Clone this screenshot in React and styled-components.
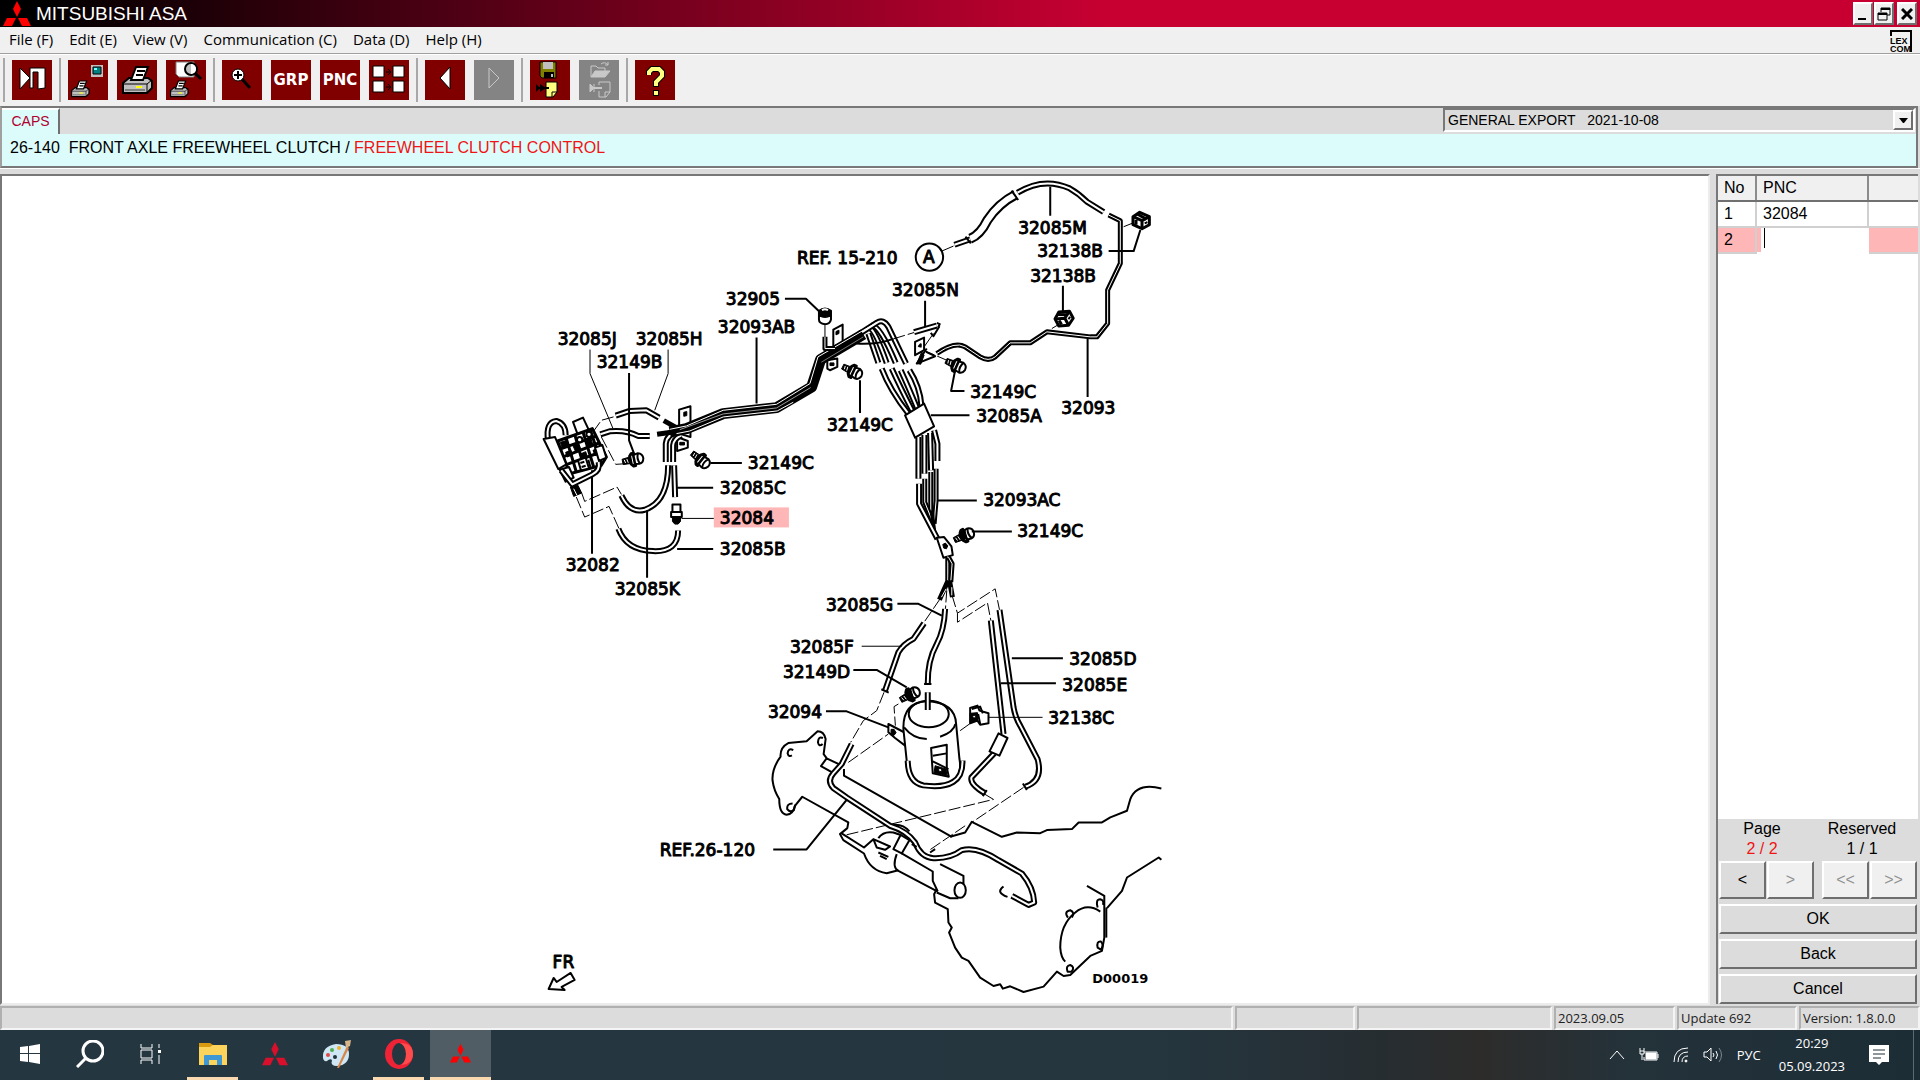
import styled, { createGlobalStyle, css } from "styled-components";

const GlobalStyle = createGlobalStyle`
  * {
    box-sizing: border-box;
  }

  body {
    margin: 0;
    background-color: #dcdcdc;
    font-family: "Liberation Sans", Arial, sans-serif;
    font-size: 16px;
    color: #000;
  }

  button, input, select {
    font: inherit;
    color: inherit;
    margin: 0;
    padding: 0;
    border: 0;
    border-radius: 0;
  }
`;

const uiFont = '"Open Sans", "Noto Sans", sans-serif';

const raised = css`
  border: 2px solid;
  border-color: #fff #6e6e6e #6e6e6e #fff;
`;

const Window = styled.div`
  height: 100vh;
  display: flex;
  flex-direction: column;
  overflow: hidden;
`;

/* ---------- title and menu ---------- */

const TitleBar = styled.header`
  height: 27px;
  flex: none;
  display: flex;
  align-items: center;
  gap: 5px;
  padding: 0 3px;
  background: linear-gradient(to right, #000 0%, #000 2%, #c80032 58%);
`;

const AppTitle = styled.h1`
  flex: 1;
  margin: 0;
  font-size: 19px;
  font-weight: normal;
  color: #fff;
`;

const WindowButtons = styled.div`
  display: flex;
  gap: 1px;
`;

const WindowButton = styled.button`
  ${raised}
  width: 20px;
  height: 23px;
  margin-left: ${(props) => (props.$apart ? "2px" : "0")};
  background-color: #f0f0f0;
  display: grid;
  place-items: center;
`;

const MenuBar = styled.nav`
  height: 27px;
  flex: none;
  display: flex;
  align-items: center;
  background-color: #f0f0f0;
  border-bottom: 1px solid #a0a0a0;
  padding: 0 8px 0 1px;
`;

const MenuItem = styled.button`
  padding: 0 8px 2px;
  background: none;
  font-family: ${uiFont};
  font-size: 15px;
  line-height: 24px;
`;

const Lexcom = styled.svg`
  margin-left: auto;
  align-self: flex-end;
`;

/* ---------- toolbar ---------- */

const ToolBar = styled.div`
  height: 52px;
  flex: none;
  display: flex;
  align-items: center;
  background-color: #f0f0f0;
  border-top: 1px solid #fff;
  padding: 0 0 1px 3px;
`;

const ToolGroup = styled.div`
  display: flex;
  gap: 9px;
  padding: 0 7px;
  height: 44px;
  align-items: center;
  border-left: 2px solid #a8a8a8;
`;

const ToolButton = styled.button`
  width: 40px;
  height: 40px;
  background-color: ${(props) => (props.disabled ? "#848484" : "#800000")};

  svg {
    display: block;
  }
`;

/* ---------- caps header ---------- */

const CapsFrame = styled.section`
  flex: none;
  border: 2px solid;
  border-color: #787878 #787878 #787878 #a0a0a0;
  margin-right: 2px;
`;

const TabStrip = styled.div`
  height: 26px;
  display: flex;
  justify-content: space-between;
  background-color: #dcdcdc;
`;

const Tab = styled.button`
  width: 58px;
  height: 26px;
  padding: 0 0 3px 1px;
  background-color: #dcfcfc;
  border-top: 2px solid #fff;
  border-right: 2px solid #707070;
  color: #b00030;
  font-size: 14px;
`;

const Catalog = styled.div`
  position: relative;
  width: 472px;
  height: 24px;
  margin-right: 1px;
  border: 2px solid;
  border-color: #787878 #fff #fff #787878;
`;

const CatalogSelect = styled.select`
  appearance: none;
  width: 100%;
  height: 20px;
  padding-left: 3px;
  background-color: #dcdcdc;
  font-size: 14px;
  outline: none;
`;

const CatalogArrow = styled.span`
  ${raised}
  position: absolute;
  top: 0;
  right: 0;
  width: 20px;
  height: 20px;
  background-color: #f0f0f0;
  display: grid;
  place-items: center;
  pointer-events: none;
`;

const PathLine = styled.div`
  height: 32px;
  padding-left: 8px;
  background-color: #dcfcfc;
  line-height: 28px;
  white-space: pre;

  span {
    color: #f01414;
  }
`;

/* ---------- work area ---------- */

const Work = styled.main`
  flex: 1;
  min-height: 0;
  display: flex;
  gap: 6px;
  padding-top: 5px;
  border-top: 1px solid #fff;
`;

const Sheet = styled.div`
  flex: 1;
  min-width: 0;
  background-color: #fff;
  border: 2px solid;
  border-color: #787878 #ececec #ececec #787878;
  margin-bottom: 1px;
`;

const Drawing = styled.svg`
  display: block;
  width: 100%;
  height: 100%;
  fill: none;
  stroke: #000;
  stroke-linejoin: round;

  path, ellipse, circle, rect {
    vector-effect: non-scaling-stroke;
  }
`;

const Line = styled.path`
  stroke-width: ${(props) => props.$w || 2}px;
`;

const Dashed = styled.path`
  stroke-width: 1px;
  stroke-dasharray: 12 3;
`;

const Solid = styled.path`
  fill: #fff;
  stroke-width: ${(props) => props.$w || 2}px;
`;

const Dark = styled.path`
  fill: #000;
  stroke-width: 1px;
`;

const Label = styled.text`
  fill: #000;
  stroke: #000;
  stroke-width: ${(props) => (props.$small ? "0" : "1px")};
  font-family: "DejaVu Sans", sans-serif;
  font-size: ${(props) => (props.$small ? "13px" : "17px")};
  font-weight: ${(props) => (props.$small ? "bold" : "normal")};
`;

const Side = styled.aside`
  width: 202px;
  flex: none;
  display: flex;
  flex-direction: column;
  border-top: 2px solid #787878;
  border-left: 2px solid #787878;
  margin: 0 2px 2px 0;
`;

const PartList = styled.div`
  flex: 1;
  background-color: #fff;
`;

const PartTable = styled.table`
  width: 100%;
  table-layout: fixed;
  border-collapse: collapse;
  text-align: left;

  th {
    height: 25px;
    padding: 0 0 0 6px;
    font-weight: normal;
    background-color: #f0f0f0;
    border-right: 2px solid #8c8c8c;
    border-bottom: 2px solid #707070;
  }

  td {
    height: 26px;
    padding: 0 0 0 6px;
    border-right: 2px solid #d0d0d0;
    border-bottom: 2px solid #d0d0d0;
  }

  th:last-child, td:last-child {
    border-right: 0;
  }
`;

const ActiveRow = styled.tr`
  background-color: #ffb6b6;

  td:nth-child(2) {
    padding-left: 4px;
    border-color: #fff;
  }
`;

const EntryCell = styled.div`
  display: flex;
  align-items: flex-start;
  height: 24px;
  padding-left: 3px;
  background-color: #fff;

  input {
    width: 90px;
    height: 20px;
    outline: none;
    background: none;
    border-left: 1px solid #000;
  }
`;

const PageInfo = styled.div`
  display: grid;
  grid-template-columns: 88px 1fr;
  text-align: center;
  line-height: 20px;
  padding-bottom: 2px;

  p {
    margin: 0;
    white-space: pre;
  }
`;

const PageValue = styled.p`
  color: ${(props) => (props.$active ? "#f01414" : "#000")};
`;

const Actions = styled.div`
  display: flex;
  flex-direction: column;
  gap: 5px;
  padding: 0 1px;
`;

const Pager = styled.div`
  display: flex;
  gap: 8px;
`;

const PagerPair = styled.div`
  flex: 1;
  display: flex;
  gap: 1px;
`;

const PanelButton = styled.button`
  ${raised}
  flex: 1;
  height: ${(props) => (props.$tall ? "38px" : "30px")};
  flex-basis: ${(props) => (props.$tall ? "0" : "30px")};
  background-color: ${(props) => (props.disabled ? "#f0f0f0" : "#dcdcdc")};
  color: ${(props) => (props.disabled ? "#909090" : "#000")};
`;

/* ---------- status and task bar ---------- */

const StatusBar = styled.footer`
  height: 24px;
  flex: none;
  display: flex;
  gap: 2px;
  font-family: ${uiFont};
  font-size: 13px;
  line-height: 20px;
  color: #222;
`;

const StatusCell = styled.div`
  flex: ${(props) => (props.$width ? "none" : "1")};
  width: ${(props) => (props.$width ? props.$width + "px" : "auto")};
  padding-left: 2px;
  border: 2px solid;
  border-color: #b0b0b0 #f4f4f4 #f4f4f4 #b0b0b0;
`;

const TaskBar = styled.div`
  height: 50px;
  flex: none;
  display: flex;
  justify-content: space-between;
  background: linear-gradient(to right, #243640 0%, #25363f 60%, #262d31 72%, #2d2c2b 77%, #24323a 85%, #1c2d36 100%);
  color: #fff;
`;

const TaskIcons = styled.div`
  display: flex;
  gap: 1px;
`;

const TaskButton = styled.button`
  width: ${(props) => (props.$wide ? "61px" : "59px")};
  display: grid;
  grid-template-rows: 1fr 3px;
  place-items: center;
  background-color: ${(props) => (props.$active ? "#505d65" : "transparent")};

  &::after {
    content: "";
    width: ${(props) => (props.$active ? "61px" : "51px")};
    height: 3px;
    background-color: ${(props) => (props.$running ? "#fbd9b0" : "transparent")};
  }
`;

const Tray = styled.div`
  display: flex;
  align-items: center;
  gap: 14px;
  padding-right: 6px;
  font-family: ${uiFont};
  font-size: 13px;
`;

const Clock = styled.time`
  text-align: center;
  line-height: 23px;
  padding: 0 4px;
`;

const Notices = styled.button`
  height: 50px;
  background: none;
  display: flex;
  align-items: center;
  padding: 0 24px 0 6px;
  border-right: 1px solid #5d6a70;
`;

/* ---------- icons ---------- */

function Diamonds({ size, color }) {
  return (
    <svg width={size} height={size} viewBox="0 0 28 26" fill={color}>
      <path d="M14 0 L18 8 L14 16 L10 8 Z" />
      <path d="M13 17 L9 25 H0 L4 17 Z" />
      <path d="M15 17 L24 17 L28 25 H19 Z" />
    </svg>
  );
}

function Printer({ x = 0, y = 0, scale = 1 }) {
  return (
    <g transform={`translate(${x} ${y}) scale(${scale})`} stroke="#000">
      <path d="M1 16 L7 11 H26 L30 14 V21 L25 26 H1 Z" fill="#c0c0c0" strokeWidth="2" />
      <path d="M9 13 L14 0 H26 L21 13 Z" fill="#fff" strokeWidth="2" />
      <path d="M15 4 H23 M14 8 H21" strokeWidth="2" />
      <path d="M1 17 H25 L30 13 M25 17 V26" fill="none" />
      <path d="M3 23 H23" stroke="#808080" strokeWidth="2" />
      <path d="M14 19 H20 V21 H14 Z" fill="#ff0" stroke="none" />
    </g>
  );
}

function ExitIcon() {
  return (
    <svg width="40" height="40" fill="#fff" stroke="#000">
      <path d="M8 8 L18 18 L8 29 Z" />
      <path d="M18 8 H33 V28 L26 29 V12 H21 V28 H18 Z" />
    </svg>
  );
}

function PrintScreenIcon() {
  return (
    <svg width="40" height="40">
      <path d="M23 5 H35 V17 H23 Z" fill="#c0c0c0" />
      <path d="M25 7 H33 V14 H25 Z" fill="#008080" stroke="#000" />
      <path d="M26 8 h3 v2 h-3 z" fill="#7ff" />
      <Printer x={3} y={21} scale={0.6} />
    </svg>
  );
}

function PrintIcon() {
  return (
    <svg width="40" height="40">
      <Printer x={5} y={7} />
    </svg>
  );
}

function PreviewIcon() {
  return (
    <svg width="40" height="40">
      <path d="M10 2 H28 V17 H13 L10 14 Z" fill="#fff" stroke="#808080" />
      <path d="M28 12 L35 19" stroke="#000" strokeWidth="3" />
      <circle cx="25" cy="9" r="6" fill="#c0c0c0" stroke="#000" strokeWidth="2" />
      <path d="M25 4 a5 5 0 0 1 0 10 z" fill="#fff" />
      <Printer x={4} y={21} scale={0.6} />
    </svg>
  );
}

function MagnifyIcon() {
  return (
    <svg width="40" height="40">
      <path d="M20 19 L28 28" stroke="#000" strokeWidth="3" />
      <circle cx="16" cy="15" r="6" fill="#fff" stroke="#000" />
      <path d="M16 11 V19 M12 15 H20" stroke="#000" strokeWidth="2" />
    </svg>
  );
}

const ToolWord = styled.span`
  font-family: "DejaVu Sans", sans-serif;
  font-weight: bold;
  font-size: 15px;
  color: #fff;
`;

function LinkIcon() {
  return (
    <svg width="40" height="40" fill="#fff" stroke="#000">
      <path d="M4 6 h11 v11 h-11 z M24 6 h11 v11 h-11 z M4 21 h11 v11 h-11 z M24 21 h11 v11 h-11 z" />
      <path d="M17 12 h5 M19 9 l3 3 l-3 3 M17 27 h5 M19 24 l3 3 l-3 3" fill="none" />
    </svg>
  );
}

function ArrowIcon({ next }) {
  return (
    <svg width="40" height="40">
      {next ? (
        <path d="M15 8 L25 18 L15 28 Z" fill="none" stroke="#c8c8c8" />
      ) : (
        <path d="M25 7 V29 L15 18 Z" fill="#fff" stroke="#000" />
      )}
    </svg>
  );
}

function SaveIcon() {
  return (
    <svg width="40" height="40">
      <path d="M10 2 H26 V18 H12 L10 16 Z" fill="#808000" stroke="#000" />
      <path d="M13 2 H23 V9 H13 Z" fill="#c0c0c0" />
      <path d="M14 12 H24 V18 H14 Z" fill="#000" />
      <path d="M21 14 h2 v3 h-2 z" fill="#c0c0c0" />
      <path d="M16 22 H27 V32 L23 37 H16 Z" fill="#ffff80" stroke="#000" />
      <path d="M27 32 H22 V37" fill="none" stroke="#000" />
      <path d="M6 24 L10 28 L6 32 Z M10 24 L16 28 L10 32 Z" fill="#000" />
      <path d="M6 28 H19" stroke="#000" strokeWidth="2" />
    </svg>
  );
}

function OpenIcon() {
  return (
    <svg width="40" height="40" fill="none" stroke="#c8c8c8">
      <path d="M12 17 V6 H17 L19 8 H26 V11" />
      <path d="M12 17 L16 11 H31 L26 17 Z" fill="#c8c8c8" />
      <path d="M22 4 Q26 1 29 5 M29 2 V5 H26" />
      <path d="M20 25 V22 H31 V32 L27 37 H20 V31 M31 32 H26 V37" />
      <path d="M11 24 L15 28 L11 32 Z M15 24 V32" fill="#c8c8c8" />
      <path d="M11 28 H23" strokeWidth="2" />
    </svg>
  );
}

function HelpIcon() {
  return (
    <svg width="40" height="40" fill="none">
      <path d="M14 15 V12 L17 9 H24 L27 12 V16 L21 22 V27" stroke="#000" strokeWidth="6" />
      <path d="M18 30 H24 V36 H18 Z" fill="#000" />
      <path d="M14 15 V12 L17 9 H24 L27 12 V16 L21 22 V26" stroke="#ffff80" strokeWidth="4" />
      <path d="M19 31 H23 V35 H19 Z" fill="#ffff80" />
    </svg>
  );
}

/* ---------- parts of the drawing ---------- */

// a pipe is a black stroke with a thinner white one on top
function Tube({ d, w = 6, bore = 2 }) {
  return (
    <>
      <Line d={d} $w={w} />
      <Line d={d} $w={bore} stroke="#fff" />
    </>
  );
}

function Bolt({ x, y, turn }) {
  return (
    <g transform={`translate(${x} ${y}) rotate(${turn})`}>
      <Dark d="M-32 -8 L-8 -10 V10 L-32 8 Z" />
      <Line d="M-26 -5 L-24 5 M-18 -6 L-16 6" stroke="#fff" $w={1} />
      <Solid d="M-8 -12 L-2 -19 H4 V19 H-2 L-8 12 Z" $w={3} />
      <Solid d="M4 -14 L18 -16 Q32 -12 31 2 Q28 16 16 16 L4 14 Z" />
      <Line d="M18 -15 Q10 0 18 15" />
    </g>
  );
}

function Clip({ x, y, turn = 0 }) {
  return (
    <g transform={`translate(${x} ${y}) rotate(${turn})`}>
      <Solid d="M-25 -12 L-5 -25 L24 -12 V12 L2 24 L-25 12 Z" $w={3} />
      <Line d="M-25 -12 L2 0 L24 -12 M2 0 V24 M-12 -20 L16 -4 M-16 -2 V12" $w={3} />
      <Line d="M10 8 L18 4" />
    </g>
  );
}

const labels = [
  [1018, 234, "32085M"],
  [1037, 257, "32138B"],
  [1030, 282, "32138B"],
  [797, 264, "REF. 15-210"],
  [892, 296, "32085N"],
  [726, 305, "32905"],
  [718, 333, "32093AB"],
  [558, 345, "32085J"],
  [636, 345, "32085H"],
  [597, 368, "32149B"],
  [970, 398, "32149C"],
  [1061, 414, "32093"],
  [976, 422, "32085A"],
  [827, 431, "32149C"],
  [748, 469, "32149C"],
  [720, 494, "32085C"],
  [983, 506, "32093AC"],
  [720, 524, "32084"],
  [1017, 537, "32149C"],
  [720, 555, "32085B"],
  [566, 571, "32082"],
  [615, 594, "32085K"],
  [826, 610, "32085G"],
  [790, 652, "32085F"],
  [1069, 664, "32085D"],
  [783, 677, "32149D"],
  [1062, 690, "32085E"],
  [768, 717, "32094"],
  [1048, 723, "32138C"],
  [660, 855, "REF.26-120"],
  [553, 967, "FR"],
];

const third = "scale(0.33333)";

function ControlValve() {
  return (
    <g transform={`translate(530 320) ${third}`}>
      <Line d="M181 88 V160 L250 325 M415 88 V160 L375 270" $w={1} />
      <Dashed d="M190 335 L215 300 L258 288 M215 350 L258 432 L290 430 M155 515 L165 543 L262 500 L275 522 M140 530 L165 590 L238 558 L268 625" />
      <Tube d="M258 286 L300 272 L350 270 L388 292" />
      <Tube d="M212 342 L240 333 Q290 328 325 347 H360" />
      <Tube d="M275 525 Q300 580 345 568 Q415 545 415 435" />
      <Tube d="M266 625 Q290 690 370 692 Q445 695 445 630" />
      <Tube d="M433 435 L436 530" />
      <Line d="M680 52 V250 M542 428 H636 M442 502 H550 M442 686 H550 M187 450 V700 M352 570 V772" />
      <Line d="M455 594 H552" $w={1} />
      <Bolt x={310} y={418} turn={-12} />
      <Bolt x={512} y={418} turn={38} />
      <Line d="M298 158 V360 L315 405" />

      <Solid d="M428 552 H452 V575 H428 Z M424 575 H456 V590 H424 Z" />
      <Dark d="M428 590 H452 V603 L445 611 H435 L428 603 Z" />

      <Solid d="M130 305 L160 292 L178 330 L145 345 Z" />
      <Solid d="M84 362 L188 325 L230 410 L215 435 L120 460 Z" $w={3} />
      <Line d="M95 385 L198 348 M104 408 L208 368 M112 432 L222 392 M110 355 L140 455 M136 345 L165 448 M160 335 L192 440 M182 330 L216 432" $w={3} />
      <Dark d="M92 366 L112 360 L118 376 L98 384 Z M128 372 L146 366 L154 388 L138 394 Z M108 396 L124 390 L128 404 L112 410 Z M168 356 L182 350 L190 374 L176 380 Z M150 402 L168 394 L174 412 L158 420 Z M190 390 L204 384 L210 400 L196 406 Z" />
      <Solid d="M145 420 L168 412 L178 444 L154 450 Z M196 382 L218 374 L230 412 L208 422 Z" />
      <Line d="M152 428 L164 424 M156 440 L168 436 M176 418 L182 440" />
      <circle cx="178" cy="342" r="8" fill="#fff" strokeWidth="2" />
      <circle cx="150" cy="358" r="8" fill="#fff" strokeWidth="2" />
      <Tube d="M55 358 Q48 305 80 302 Q108 310 108 345" />
      <Solid d="M42 356 L76 350 L110 432 L86 446 Z" />
      <Solid d="M90 448 L118 440 L132 472 L108 484 Z" />
      <Tube d="M95 450 L128 492 L188 462 Q212 450 207 425" />
      <Dark d="M122 500 L145 495 L156 518 L132 528 Z" />
      <Line d="M132 505 L142 525" stroke="#fff" $w={1} />

      <Solid d="M448 268 L482 258 V350 L448 340 Z M442 350 L474 362 V382 L442 392 Z" />
      <Dark d="M462 276 l9 -2 v12 l-9 2 z M450 366 h14 v8 h-14 z" />
      <Tube d="M408 425 V370 Q412 340 445 335" />
      <Tube d="M430 425 V375 Q432 355 455 345" />
    </g>
  );
}

function UpperPipes() {
  return (
    <g transform={`translate(780 170) ${third}`}>
      <Solid d="M160 478 L188 463 V515 L160 530 Z M142 570 L172 565 V590 L150 600 L142 595 Z" />
      <Dark d="M168 484 l9 -4 v10 l-9 4 z M150 578 h12 v8 h-12 z" />
      <Line d="M-348 751 L-310 772 M-368 792 L-320 785" $w={5} />
      <Tube d="M265 490 L295 578" />
      <Tube d="M270 475 Q285 480 320 578" />
      <Tube d="M275 465 Q300 465 347 578" />
      <Tube d="M240 490 L290 458 Q310 445 325 470 L378 580" />
      <Line d="M-330 785 L-280 775 L-170 730 L-10 712 L95 650 L122 568 L250 492" $w={11} />
      <Line d="M-330 777 L-280 767 L-170 720 L-10 702 L90 640 L114 560 L290 457" stroke="#fff" $w={1} />
      <Line d="M-310 790 L-270 782 L-170 740 L-8 722 L40 696" stroke="#fff" $w={1} />
      <Line d="M-300 778 L-170 731 L-10 713 L92 652" stroke="#999" $w={1} />
      <Line d="M124 576 L250 500" stroke="#777" $w={1} />
      <Tube d="M135 500 V535 H165" w={5} bore={1} />

      <Solid d="M117 422 Q135 408 153 422 V448 Q150 462 135 462 Q117 460 117 448 Z" />
      <Dark d="M117 422 Q135 408 153 422 V438 Q135 446 117 438 Z" />
      <Line d="M126 420 Q135 415 144 420" stroke="#fff" />
      <Line d="M135 465 V500" $w={1} />
      <Line d="M230 520 Q290 524 340 506" />
      <Dashed d="M340 506 L402 487 M430 540 L500 570" />

      <Tube d="M402 486 L470 466" />
      <Line d="M470 458 L479 462 L474 472" />
      <Solid d="M405 515 L432 502 V540 L405 555 Z" />
      <Line d="M478 468 L460 498 L452 488 M440 535 L410 580 L465 558 L438 545 M415 530 L422 522 V532" />
      <Dark d="M410 580 L425 545 L432 555 L422 582 Z" />
      <Line d="M432 530 L460 490" $w={1} />

      <Line d="M485 243 L520 228 M1030 170 L1055 160 M815 475 L840 460" $w={1} />
      <Tube d="M523 224 L575 206" />
      <Tube d="M570 206 Q600 195 622 150 Q655 100 706 74" w={10} bore={6} />
      <Line d="M556 200 L572 220 M694 62 L714 90" />
      <Tube d="M712 68 Q790 20 868 55 Q895 70 920 95 L970 126" />
      <Tube d="M985 135 L1020 152 V280 L982 360 V460 L950 500 H930 L800 485 L750 518 H690 L645 560 Q625 575 600 560 L555 530 Q525 512 470 550" w={5} bore={1} />
      <Clip x={1083} y={152} />
      <Clip x={852} y={445} turn={-28} />

      <Line d="M810 50 V137 M985 243 H1060 L1080 180 M848 347 V425 M435 392 V470 M922 505 V680 M240 630 V728 M525 600 L513 662 H553 M452 735 H568 M15 386 H78 L118 424" />
      <circle cx="448" cy="261" r="41" strokeWidth="2" />
      <Bolt x={217} y={603} turn={26} />
      <Bolt x={527} y={585} turn={24} />

      <Tube d="M305 595 Q330 660 385 730" />
      <Tube d="M335 595 Q360 650 398 724" />
      <Tube d="M362 600 Q385 650 412 716" />
      <Tube d="M388 600 Q420 650 424 706" />
      <Solid d="M375 735 L432 700 L462 768 L405 802 Z" />
    </g>
  );
}

function MiddlePipes() {
  return (
    <g transform={`translate(780 430) ${third}`}>
      <Tube d="M415 20 V145" />
      <Tube d="M433 14 V130" />
      <Tube d="M450 8 L453 120" />
      <Tube d="M462 0 L472 40 V92" />
      <Tube d="M452 125 V270" w={5} bore={1} />
      <Tube d="M434 145 V215 L458 275" w={5} bore={1} />
      <Tube d="M468 115 V210 L462 280" w={5} bore={1} />
      <Line d="M455 240 L462 300" $w={4} />
      <Tube d="M417 160 V220 L472 325" />
      <Solid d="M470 322 L492 320 L514 348 L518 374 L490 382 Z" />
      <Dark d="M488 342 l8 -4 l7 8 l-4 9 l-8 -2 z" />
      <Tube d="M503 378 V450" w={5} bore={1} />
      <Tube d="M505 380 L516 400 L512 455" w={5} bore={1} />
      <Line d="M504 450 L478 508 M508 450 L517 500" $w={5} />
      <Line d="M498 475 L484 500 M515 470 V495" stroke="#fff" $w={1} />
      <Dashed d="M480 505 L432 575 M500 480 L496 535 M516 495 L532 548 L645 475 L658 538 M532 548 V575 L622 517 L632 570" />
      <Dashed d="M312 785 L290 840 L250 870 L212 935 M355 820 L342 828 L346 885 M540 900 L575 875" />

      <Tube d="M495 535 Q492 600 470 640 Q442 690 443 760" />
      <Tube d="M432 578 L400 625 Q370 640 355 665 L315 780" />
      <Tube d="M658 538 L700 830 Q705 860 720 885 L772 985 Q790 1050 735 1068" />
      <Tube d="M632 570 L670 910" />
      <Tube d="M642 968 L574 1040 Q568 1060 615 1088" />
      <Solid d="M655 908 L682 922 L658 975 L628 962 Z" />
      <Line d="M432 760 H454 M304 776 L326 786 M728 1058 L740 1078 M608 1096 L620 1078" />

      <Solid d="M325 880 L382 910 V950 L345 922 L325 905 Z" />
      <Dark d="M333 896 h9 l6 10 l-6 8 h-9 z" />
      <Solid d="M370 895 Q368 815 440 812 Q525 815 528 880 L538 985 Q552 1060 470 1068 Q390 1066 382 1010 Z" />
      <ellipse cx="446" cy="850" rx="60" ry="40" strokeWidth="2" />
      <Line d="M372 890 Q400 925 440 925 M480 918 Q520 905 526 880" />
      <Tube d="M383 990 Q384 1055 430 1064 Q550 1080 547 990" />
      <Tube d="M443 785 V838" />
      <Solid d="M453 952 L500 942 V1010 L506 1038 L458 1028 Z" />
      <Line d="M458 975 L500 968 M458 992 L505 1015" />
      <Dark d="M465 1005 L498 1015 L500 1034 L462 1026 Z" />
      <Solid d="M474 1015 l8 -2 l4 8 l-8 2 z" $w={1} />

      <Solid d="M570 832 L592 825 L598 840 L625 848 V878 L600 882 L592 870 L570 878 Z" />
      <Dark d="M570 848 L592 846 V870 L570 876 Z" />
      <circle cx="582" cy="858" r="4" fill="#fff" strokeWidth="1" />
      <Line d="M575 835 L600 828 L608 848 M594 850 L600 880" />

      <Bolt x={552} y={316} turn={-24} />
      <Bolt x={390} y={793} turn={-28} />
      <Dark d="M540 305 l14 -8 l6 26 l-14 8 z M378 786 l14 -10 l8 26 l-14 8 z" />
      <Line d="M352 520 H415 L485 555 M220 718 H290 L380 770 M138 842 H200 L325 890 M472 210 H590 M575 303 H695 M695 683 H848 M662 758 H827" />
      <Line d="M245 647 H365 M625 860 H787" $w={1} />
    </g>
  );
}

function AxleTube() {
  return (
    <g transform={`translate(640 700) ${third}`}>
      <Line d="M560 172 L551 160 L557 115 Q552 92 533 92 L500 122 L445 127 Q420 140 422 168 Q395 205 398 240 Q402 270 418 295 Q418 340 440 342 Q460 340 465 315 L487 288 L625 365 L622 382 L600 400 L610 418 L672 458 Q690 510 740 517 L775 508" />
      <Line d="M549 112 Q535 105 534 125 Q537 140 548 130 M460 148 Q445 140 443 158 Q446 170 456 164 M458 308 Q440 308 442 325 Q450 336 462 328 L466 312" />
      <Line d="M600 192 L560 173 L543 196 L578 216 M612 205 V225 L935 408" />
      <Line d="M605 398 L672 440 L700 415 L750 437 L735 447 L710 440 L700 415 M715 412 Q730 390 760 395 L780 402 M715 455 L745 468 M720 465 L740 475 M762 372 Q790 370 808 392" />
      <Line d="M770 460 Q755 500 775 510 L893 572 M785 458 L878 512 V540 L893 572" />
      <Dashed d="M625 185 L745 100 M620 402 L1060 296 L1030 278" />
      <Tube d="M635 130 L605 190 L580 218 Q560 240 580 262 L620 290 L750 375 Q800 390 825 425 Q842 470 880 472 Q930 474 965 448 Q1010 435 1075 478 L1145 518 Q1180 560 1182 605 L1165 612 L1115 585" />
      <Solid d="M760 445 L782 402 L808 418 L785 458 Z" />
      <Line d="M815 430 L830 438 M870 455 L885 445" />
      <Line d="M400 446 H500 L620 297" />
    </g>
  );
}

function Housing() {
  return (
    <g transform={`translate(900 720) ${third}`}>
      <Line d="M150 348 L195 335 L215 303 L305 348 L350 335 L420 337 L440 328 L515 325 L535 305 H605 L630 290 L680 270 L690 235 Q710 185 783 203" />
      <Dashed d="M370 200 L215 305 M195 315 L85 390" />
      <Line d="M120 430 L190 465 V490 M110 515 L150 532 H175" />
      <ellipse cx="180" cy="508" rx="17" ry="23" strokeWidth="2" />
      <Line d="M110 505 L102 520 L105 545 L143 565 L145 605 L155 620 L147 635 L165 680 L185 710 L205 720 L240 770 L280 795 L300 790 L308 803 L330 796 L370 813 L430 797 L470 752 L490 765 L510 762 L570 705 L605 690 L612 650 V525 L560 495" />
      <Line d="M600 572 Q560 545 525 575 Q480 610 480 680 Q482 710 495 722 M620 562 L665 510 L680 470 L775 410 L783 417 M310 497 Q285 515 322 528" />
      <Line d="M618 560 V650" />
      <Line d="M592 560 Q585 535 600 535 Q612 538 608 552 M503 590 Q490 572 510 568 Q525 575 515 590 M592 680 Q588 660 602 662 Q612 672 602 686 Z M502 752 Q495 735 510 732 Q525 738 514 752 Z" />
    </g>
  );
}

function PartsDrawing() {
  return (
    <Drawing viewBox="535 176 640 826" role="img" aria-label="Freewheel clutch control">
      <rect x="714" y="507" width="75" height="20" fill="#ffb6b6" stroke="none" />
      <AxleTube />
      <Housing />
      <ControlValve />
      <UpperPipes />
      <MiddlePipes />
      <path d="M549 988 L554 977 L557 981 L571 972 L575 979 L562 986 L565 989 Z" strokeWidth="2" />
      {labels.map(([x, y, text]) => (
        <Label key={text + x + y} x={x} y={y}>
          {text}
        </Label>
      ))}
      <Label x="923" y="263">
        A
      </Label>
      <Label x="1092" y="982" $small>
        D00019
      </Label>
    </Drawing>
  );
}

/* ---------- page ---------- */

const menus = ["File (F)", "Edit (E)", "View (V)", "Communication (C)", "Data (D)", "Help (H)"];

function App() {
  return (
    <Window>
      <GlobalStyle />
      <TitleBar>
        <Diamonds size={28} color="#f00" />
        <AppTitle>MITSUBISHI ASA</AppTitle>
        <WindowButtons>
          <WindowButton aria-label="Minimize">
            <svg width="12" height="14">
              <path d="M1 11 H9 V13 H1 Z" />
            </svg>
          </WindowButton>
          <WindowButton aria-label="Restore">
            <svg width="14" height="14" fill="none" stroke="#000">
              <path d="M4 5 V1 H13 V8 H10 M1 6 H10 V13 H1 Z" />
              <path d="M4 2 H13 M1 7 H10" strokeWidth="2" />
            </svg>
          </WindowButton>
          <WindowButton aria-label="Close" $apart>
            <svg width="12" height="12" stroke="#000" strokeWidth="3">
              <path d="M1 1 L11 11 M11 1 L1 11" />
            </svg>
          </WindowButton>
        </WindowButtons>
      </TitleBar>

      <MenuBar>
        {menus.map((name) => (
          <MenuItem key={name}>{name}</MenuItem>
        ))}
        <Lexcom width="22" height="23" fontFamily="Liberation Sans" fontWeight="bold" fontSize="9">
          <path d="M1 6 V1 H21 V22" fill="none" stroke="#000" strokeWidth="2" />
          <text x="0" y="14">LEX</text>
          <text x="0" y="22">COM</text>
        </Lexcom>
      </MenuBar>

      <ToolBar>
        <ToolGroup>
          <ToolButton aria-label="Exit"><ExitIcon /></ToolButton>
        </ToolGroup>
        <ToolGroup>
          <ToolButton aria-label="Print screen"><PrintScreenIcon /></ToolButton>
          <ToolButton aria-label="Print"><PrintIcon /></ToolButton>
          <ToolButton aria-label="Print preview"><PreviewIcon /></ToolButton>
        </ToolGroup>
        <ToolGroup>
          <ToolButton aria-label="Zoom"><MagnifyIcon /></ToolButton>
          <ToolButton><ToolWord>GRP</ToolWord></ToolButton>
          <ToolButton><ToolWord>PNC</ToolWord></ToolButton>
          <ToolButton aria-label="Links"><LinkIcon /></ToolButton>
        </ToolGroup>
        <ToolGroup>
          <ToolButton aria-label="Previous"><ArrowIcon /></ToolButton>
          <ToolButton aria-label="Next" disabled><ArrowIcon next /></ToolButton>
        </ToolGroup>
        <ToolGroup>
          <ToolButton aria-label="Save"><SaveIcon /></ToolButton>
          <ToolButton aria-label="Open" disabled><OpenIcon /></ToolButton>
        </ToolGroup>
        <ToolGroup>
          <ToolButton aria-label="Help"><HelpIcon /></ToolButton>
        </ToolGroup>
      </ToolBar>

      <CapsFrame>
        <TabStrip>
          <Tab>CAPS</Tab>
          <Catalog>
            <CatalogSelect aria-label="Catalog">
              <option>{"GENERAL EXPORT\u00a0\u00a0\u00a02021-10-08"}</option>
            </CatalogSelect>
            <CatalogArrow>
              <svg width="9" height="5">
                <path d="M0 0 H9 L5 5 H4 Z" />
              </svg>
            </CatalogArrow>
          </Catalog>
        </TabStrip>
        <PathLine>
          {"26-140  FRONT AXLE FREEWHEEL CLUTCH / "}
          <span>FREEWHEEL CLUTCH CONTROL</span>
        </PathLine>
      </CapsFrame>

      <Work>
        <Sheet>
          <PartsDrawing />
        </Sheet>
        <Side>
          <PartList>
            <PartTable>
              <colgroup>
                <col width="38" />
                <col width="112" />
                <col />
              </colgroup>
              <thead>
                <tr>
                  <th>No</th>
                  <th>PNC</th>
                  <th></th>
                </tr>
              </thead>
              <tbody>
                <tr>
                  <td>1</td>
                  <td>32084</td>
                  <td></td>
                </tr>
                <ActiveRow>
                  <td>2</td>
                  <td>
                    <EntryCell>
                      <input type="text" aria-label="PNC 2" />
                    </EntryCell>
                  </td>
                  <td></td>
                </ActiveRow>
              </tbody>
            </PartTable>
          </PartList>
          <PageInfo>
            <p>Page</p>
            <p>Reserved</p>
            <PageValue $active>2 / 2</PageValue>
            <PageValue>1 / 1</PageValue>
          </PageInfo>
          <Actions>
            <Pager>
              <PagerPair>
                <PanelButton $tall>&lt;</PanelButton>
                <PanelButton $tall disabled>&gt;</PanelButton>
              </PagerPair>
              <PagerPair>
                <PanelButton $tall disabled>&lt;&lt;</PanelButton>
                <PanelButton $tall disabled>&gt;&gt;</PanelButton>
              </PagerPair>
            </Pager>
            <PanelButton>OK</PanelButton>
            <PanelButton>Back</PanelButton>
            <PanelButton>Cancel</PanelButton>
          </Actions>
        </Side>
      </Work>

      <StatusBar>
        <StatusCell />
        <StatusCell $width={120} />
        <StatusCell $width={195} />
        <StatusCell $width={121}>2023.09.05</StatusCell>
        <StatusCell $width={120}>Update 692</StatusCell>
        <StatusCell $width={121}>Version: 1.8.0.0</StatusCell>
      </StatusBar>

      <TaskBar>
        <TaskIcons>
          <TaskButton aria-label="Start">
            <svg width="20" height="20" fill="#fff">
              <path d="M0 3 L8 2 V9 H0 Z M9 2 L20 0 V9 H9 Z M0 10 H8 V18 L0 17 Z M9 10 H20 V20 L9 18 Z" />
            </svg>
          </TaskButton>
          <TaskButton aria-label="Search">
            <svg width="28" height="28" fill="none" stroke="#fff" strokeWidth="3">
              <circle cx="17" cy="11" r="10" />
              <path d="M10 18 L1 27" />
            </svg>
          </TaskButton>
          <TaskButton $wide aria-label="Task view">
            <svg width="21" height="20" fill="none" stroke="#fff">
              <path d="M1 0 V4 H12 V0 M1 6 H12 V14 H1 Z M1 20 V16 H12 V20 M19 0 V4 M19 11 V20" />
              <path d="M18 6 h3 v3 h-3 z" fill="#fff" stroke="none" />
            </svg>
          </TaskButton>
          <TaskButton $wide $running aria-label="Explorer">
            <svg width="28" height="24">
              <path d="M0 1 H11 L14 3 H28 V8 H0 Z" fill="#d99a10" />
              <path d="M0 5 H11 L14 3 H28 V23 H0 Z" fill="#fcd45c" />
              <path d="M5 23 V14 Q5 13 6 13 H22 Q23 13 23 14 V23 H18 V18 H10 V23 Z" fill="#3f97d3" />
            </svg>
          </TaskButton>
          <TaskButton $wide aria-label="ASA launcher"><Diamonds size={26} color="#d8102c" /></TaskButton>
          <TaskButton $wide aria-label="Paint">
            <svg width="30" height="28">
              <path d="M1 18 Q0 6 14 4 Q27 4 27 14 Q27 25 15 26 Q8 26 10 20 Q8 18 5 21 Q2 22 1 18 Z" fill="#cfe6f4" />
              <circle cx="6" cy="15" r="2" fill="#e04848" />
              <circle cx="10" cy="10" r="2" fill="#4cae4c" />
              <circle cx="17" cy="8" r="2" fill="#f0b030" />
              <circle cx="13" cy="17" r="2" fill="#22333c" />
              <path d="M25 6 L15 28 L17 28 L27 8 Z" fill="#d8874a" />
              <path d="M23 1 L29 0 L28 6 L24 8 Z" fill="#d9b48a" />
            </svg>
          </TaskButton>
          <TaskButton $wide $running aria-label="Opera">
            <svg width="30" height="30">
              <path fillRule="evenodd" d="M15 0 A14 15 0 1 0 15 30 A14 15 0 1 0 15 0 Z M15 4 A7 11 0 1 1 15 26 A7 11 0 1 1 15 4 Z" fill="#ee2436" />
              <path d="M16 4 Q29 4 29 15 Q29 25 17 26 Q22 23 22 15 Q22 7 16 4 Z" fill="#ff4b4b" />
            </svg>
          </TaskButton>
          <TaskButton $wide $running $active aria-label="Mitsubishi ASA"><Diamonds size={21} color="#f00" /></TaskButton>
        </TaskIcons>
        <Tray>
          <svg width="16" height="10" fill="none" stroke="#fff" strokeWidth="1">
            <path d="M1 9 L8 1 L15 9" />
          </svg>
          <svg width="20" height="14" fill="none" stroke="#fff">
            <path d="M5 4 H18 V12 H5 V9 M19 6 V10" />
            <path d="M7 5 h10 v6 h-10 z" fill="#fff" />
            <path d="M1 0 V3 H5 V0 M1 3 V6 H5 V3 M3 6 V12" />
          </svg>
          <svg width="16" height="16" fill="none" stroke="#fff">
            <path d="M1 15 Q1 1 15 1 M5 15 Q5 5 15 5 M9 15 Q9 9 15 9" />
            <circle cx="13" cy="14" r="1" fill="#fff" />
          </svg>
          <svg width="20" height="16" fill="none" stroke="#fff">
            <path d="M1 5 H4 L8 1 V14 L4 10 H1 Z M10 6 Q12 8 10 10 M13 4 Q16 8 13 12" />
            <path d="M16 1 Q21 8 16 15" stroke="#7d8a90" />
          </svg>
          <span>РУС</span>
          <Clock>
            20:29
            <br />
            05.09.2023
          </Clock>
          <Notices aria-label="Notifications">
            <svg width="20" height="20">
              <path d="M0 0 H20 V17 H13 L10 20 L7 17 H0 Z" fill="#fff" />
              <path d="M4 5 H16 M4 9 H16 M4 13 H12" stroke="#1e2e36" />
            </svg>
          </Notices>
        </Tray>
      </TaskBar>
    </Window>
  );
}

export default App;
